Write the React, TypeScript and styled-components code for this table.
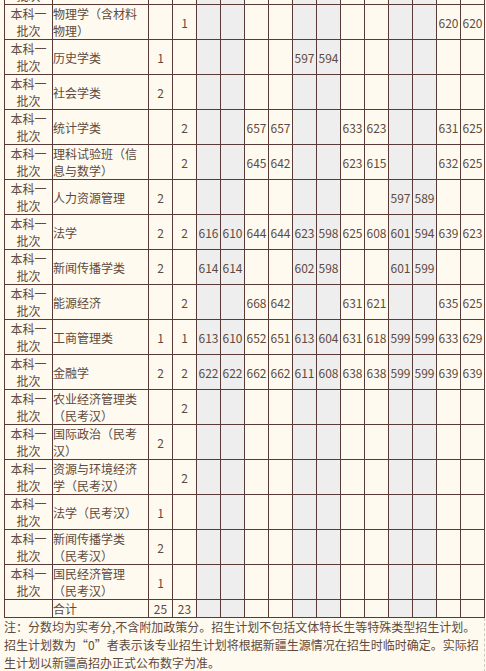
import React from 'react';
import styled, { createGlobalStyle } from 'styled-components';

const LINE = '#5a3a36';
const CREAM = '#fffaef';
const GRAY = '#eeeeee';
const INK = '#5e4a40';

const GlobalStyle = createGlobalStyle`
  html, body {
    margin: 0;
    padding: 0;
    background: ${CREAM};
  }
  body {
    font-family: "Noto Sans CJK SC", "Microsoft YaHei", sans-serif;
    font-size: 12px;
    color: ${INK};
  }
`;

const Page = styled.div`
  padding-left: 4px;
  width: 481px;
`;

const Table = styled.div`
  margin-top: -31px;
  border-top: 1px solid ${LINE};
  border-left: 1px solid ${LINE};
  width: 480px;
`;

const Row = styled.div`
  display: grid;
  grid-template-columns: 48px 96px repeat(14, 24px);
`;

const Cell = styled.div<{ $shade?: boolean; $left?: boolean }>`
  box-sizing: border-box;
  border-right: 1px solid ${LINE};
  border-bottom: 1px solid ${LINE};
  background: ${(p) => (p.$shade ? GRAY : 'transparent')};
  display: flex;
  align-items: center;
  justify-content: ${(p) => (p.$left ? 'flex-start' : 'center')};
  text-align: ${(p) => (p.$left ? 'left' : 'center')};
  line-height: 17px;
  overflow: hidden;
`;

const Notes = styled.p`
  margin: 0;
  width: 480px;
  border-right: 1px dashed #cfcac0;
  line-height: 18px;
  font-size: 12px;
  color: ${INK};
`;

type RowData = { kind: string; name: string; a?: string; b?: string; s?: string };

const K = '本科一批次';

const rows: RowData[] = [
  { kind: K, name: '' },
  { kind: K, name: '物理学（含材料物理）', b: '1', s: '- - - - - - - - - - 620 620' },
  { kind: K, name: '历史学类', a: '1', s: '- - - - 597 594 - - - - - -' },
  { kind: K, name: '社会学类', a: '2' },
  { kind: K, name: '统计学类', b: '2', s: '- - 657 657 - - 633 623 - - 631 625' },
  { kind: K, name: '理科试验班（信息与数学）', b: '2', s: '- - 645 642 - - 623 615 - - 632 625' },
  { kind: K, name: '人力资源管理', a: '2', s: '- - - - - - - - 597 589 - -' },
  { kind: K, name: '法学', a: '2', b: '2', s: '616 610 644 644 623 598 625 608 601 594 639 623' },
  { kind: K, name: '新闻传播学类', a: '2', s: '614 614 - - 602 598 - - 601 599 - -' },
  { kind: K, name: '能源经济', b: '2', s: '- - 668 642 - - 631 621 - - 635 625' },
  { kind: K, name: '工商管理类', a: '1', b: '1', s: '613 610 652 651 613 604 631 618 599 599 633 629' },
  { kind: K, name: '金融学', a: '2', b: '2', s: '622 622 662 662 611 608 638 638 599 599 639 639' },
  { kind: K, name: '农业经济管理类（民考汉）', b: '2' },
  { kind: K, name: '国际政治（民考汉）', a: '2' },
  { kind: K, name: '资源与环境经济学（民考汉）', b: '2' },
  { kind: K, name: '法学（民考汉）', a: '1' },
  { kind: K, name: '新闻传播学类（民考汉）', a: '2' },
  { kind: K, name: '国民经济管理（民考汉）', a: '1' },
  { kind: '', name: '合计', a: '25', b: '23' },
];

const isShaded = (i: number) => Math.floor(i / 2) % 2 === 0;

export default function App() {
  return (
    <>
      <GlobalStyle />
      <Page>
        <Table>
          {rows.map((r, ri) => {
            const scores = (r.s ?? '- - - - - - - - - - - -').split(' ').map((v) => (v === '-' ? '' : v));
            return (
              <Row key={ri}>
                <Cell>{r.kind}</Cell>
                <Cell $left>{r.name}</Cell>
                <Cell>{r.a ?? ''}</Cell>
                <Cell>{r.b ?? ''}</Cell>
                {scores.map((v, i) => (
                  <Cell key={i} $shade={isShaded(i)}>
                    {v}
                  </Cell>
                ))}
              </Row>
            );
          })}
        </Table>
        <Notes>
          注：分数均为实考分,不含附加政策分。招生计划不包括文体特长生等特殊类型招生计划。招生计划数为“0”者表示该专业招生计划将根据新疆生源情况在招生时临时确定。实际招生计划以新疆高招办正式公布数字为准。
        </Notes>
      </Page>
    </>
  );
}
